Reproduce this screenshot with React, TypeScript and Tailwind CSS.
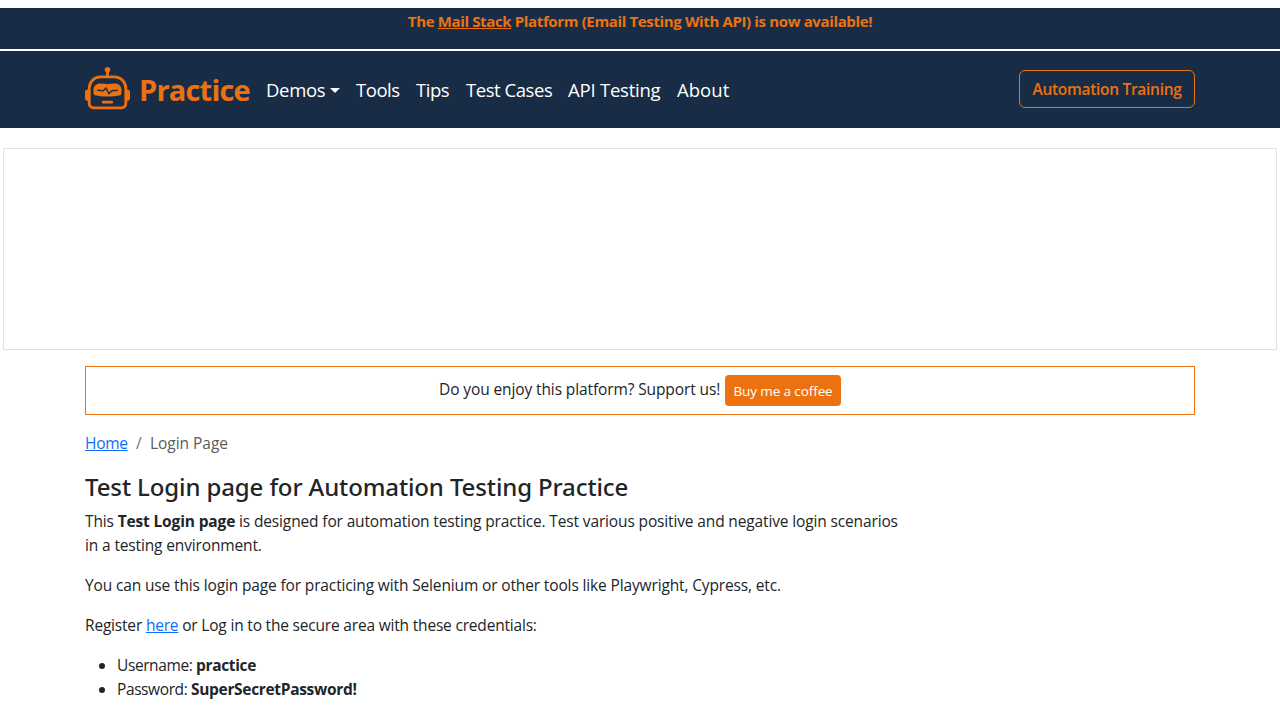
import { BsRobot } from "react-icons/bs";

const navLinks = [
  { label: "Tools", width: "w-[44px]" },
  { label: "Tips", width: "w-[34px]" },
  { label: "Test Cases", width: "w-[86px]" },
  { label: "API Testing", width: "w-[93px] tracking-[-0.22px]" },
  { label: "About", width: "w-[53px] tracking-[0.05px]" },
];

export default function App() {
  return (
    <div className="h-[720px] overflow-hidden bg-white pt-2 font-['Open_Sans','Noto_Sans',sans-serif] text-base leading-6 text-[#212529]">
      <div className="flex h-[41px] justify-center bg-[#192c45] pt-px">
        <p className="whitespace-nowrap text-[15px] leading-6 font-bold tracking-[-0.36px] text-[#ec7211]">
          The <a className="underline">Mail Stack</a> Platform (Email Testing With API) is now available!
        </p>
      </div>

      <nav className="mt-0.5 h-[77px] bg-[#192c45] px-[85px]">
        <div className="flex h-full items-center pb-px">
          <BsRobot className="size-[45px] shrink-0 text-[#ec7211]" />
          <span className="ml-[9px] w-[111px] whitespace-nowrap pt-px text-[29px] font-bold tracking-[-0.8px] text-[#ec7211]">Practice</span>
          <div className="ml-4 flex items-center gap-4 whitespace-nowrap pt-0.5 text-[18.5px] tracking-[-0.45px] text-white">
            <a className="flex w-[74px] items-center">
              <span className="w-[60px] tracking-[-0.3px]">Demos</span>
              <span className="ml-1 size-0 border-x-[5px] border-t-[5px] border-x-transparent border-t-white" />
            </a>
            {navLinks.map((link) => (
              <a key={link.label} className={link.width}>{link.label}</a>
            ))}
          </div>
          <button className="ml-auto h-[38px] w-[176px] whitespace-nowrap rounded-md border border-[#ec7211] text-[15.5px] font-semibold tracking-[-0.29px] text-[#ec7211]">
            Automation Training
          </button>
        </div>
      </nav>

      <div className="mx-[3px] mt-5 h-[202px] border border-[#dee2e6]" />

      <main className="mx-auto mt-4 w-[1110px]">
        <div className="flex h-[49px] items-center justify-center border border-[#ec7211] pb-px">
          <span className="-mt-0.5 w-[281px] whitespace-nowrap text-[15.5px] tracking-[-0.11px]">Do you enjoy this platform? Support us!</span>
          <button className="ml-[5px] h-[31px] w-[116px] whitespace-nowrap rounded bg-[#ec7211] pt-px text-[13.5px] tracking-[-0.1px] text-white">Buy me a coffee</button>
        </div>

        <div className="mt-4 flex gap-2 text-[15.5px]">
          <a className="w-[43px] tracking-[-0.3px] text-[#0d6efd] underline">Home</a>
          <span className="w-[6px] text-[#6c757d]">/</span>
          <span className="tracking-[-0.04px] text-[#595c5f]">Login Page</span>
        </div>

        <h1 className="mt-[17px] whitespace-nowrap font-['Noto_Sans','Open_Sans',sans-serif] text-2xl leading-[29px] font-medium tracking-[-0.12px]">Test Login page for Automation Testing Practice</h1>

        <div className="mt-2 whitespace-nowrap text-[15.5px] tracking-[-0.14px]">
          <p>
            This <b className="tracking-[-0.15px]">Test Login page</b> is designed for automation testing practice. Test various positive and negative login scenarios
            <br />
            in a testing environment.
          </p>
          <p className="mt-4">You can use this login page for practicing with Selenium or other tools like Playwright, Cypress, etc.</p>
          <p className="mt-4 tracking-[-0.19px]">
            Register <a className="text-[#0d6efd] underline">here</a> or Log in to the secure area with these credentials:
          </p>
          <ul className="mt-4 list-disc pl-8 tracking-[-0.4px]">
            <li>Username: <b className="tracking-[-0.34px]">practice</b></li>
            <li>Password: <b className="tracking-[-0.32px]">SuperSecretPassword!</b></li>
          </ul>
        </div>
      </main>
    </div>
  );
}
